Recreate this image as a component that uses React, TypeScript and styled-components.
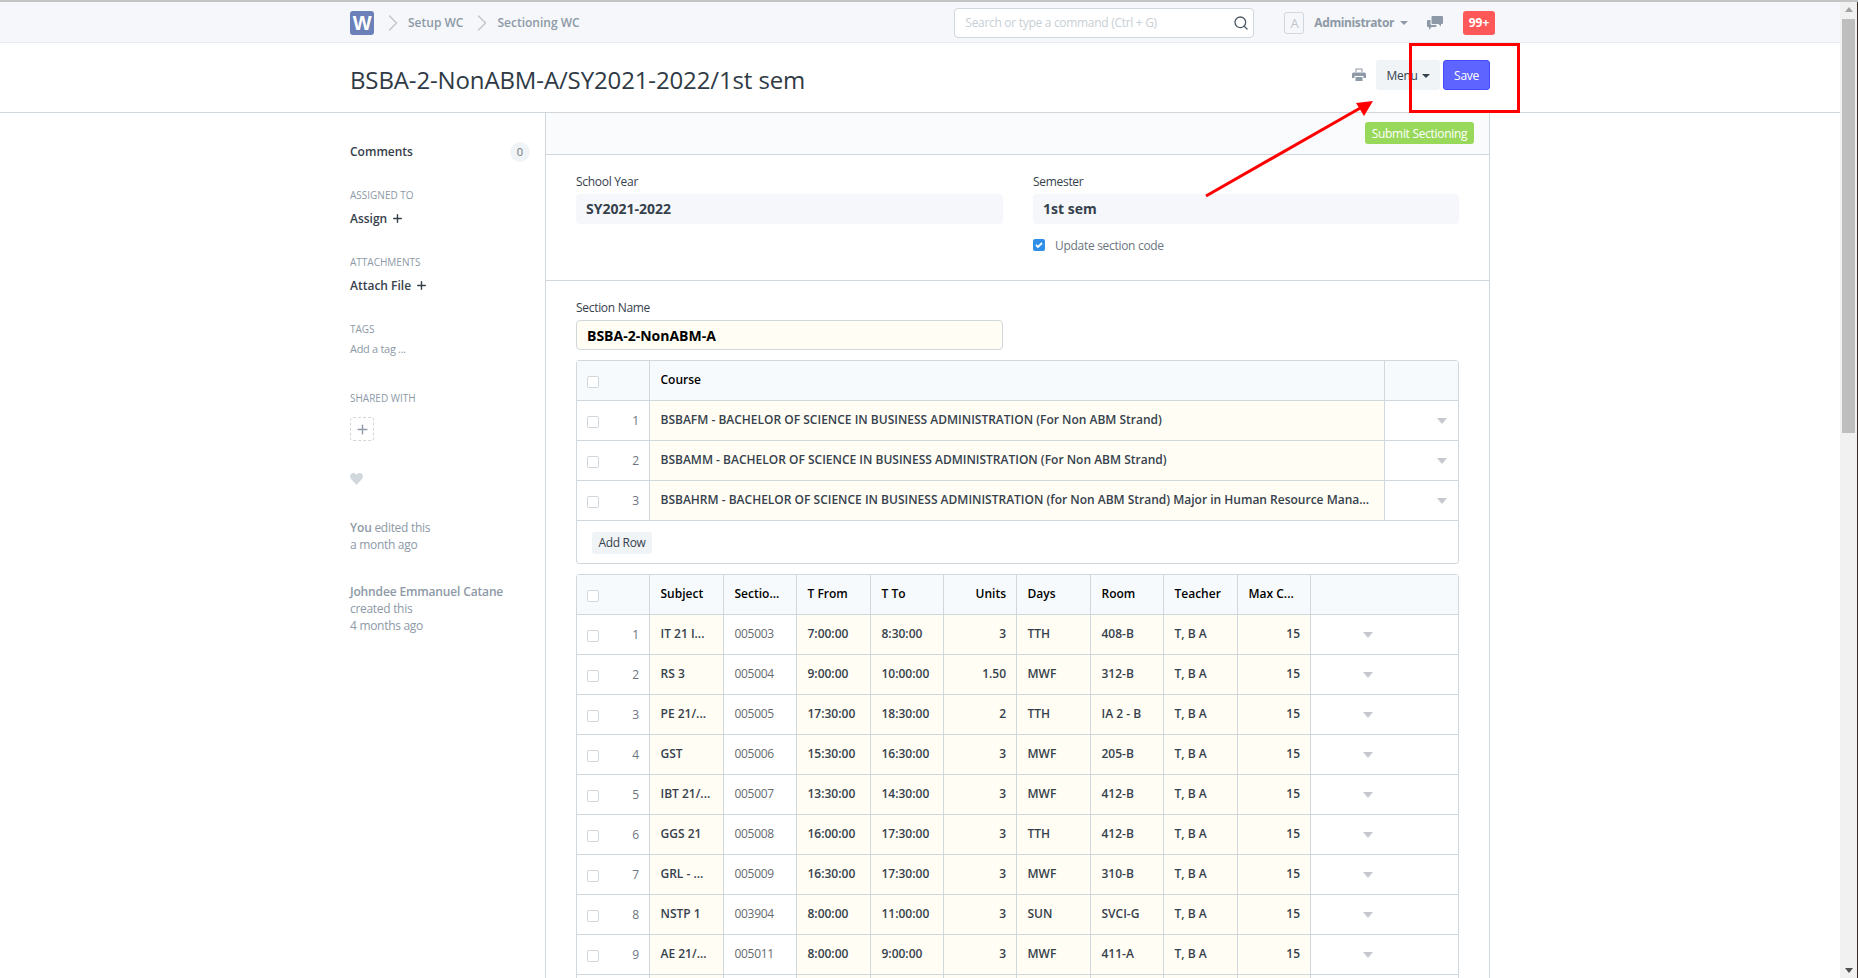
import React from 'react';
import styled, { createGlobalStyle } from 'styled-components';
import { Search, ChevronRight, Plus } from 'lucide-react';

const GlobalStyle = createGlobalStyle`
  html, body {
    margin: 0;
    padding: 0;
    height: 100%;
    overflow: hidden;
    background: #fff;
  }
  * {
    box-sizing: border-box;
  }
`;

const FONT = `'Open Sans', 'Noto Sans', sans-serif`;

const Screen = styled.div`
  position: relative;
  width: 1858px;
  height: 978px;
  overflow: hidden;
  display: flex;
  flex-direction: column;
  font-family: ${FONT};
  font-size: 12px;
  letter-spacing: -0.3px;
  color: #36414c;
  font-stretch: 92%;
`;

const TopEdge = styled.div`
  height: 2px;
  flex: none;
  background: #c4c4c4;
`;

const Body = styled.div`
  flex: 1;
  min-height: 0;
  display: flex;
`;

const Page = styled.div`
  flex: 1;
  min-width: 0;
  display: flex;
  flex-direction: column;
  overflow: hidden;
`;

const ScrollTrack = styled.div`
  width: 17px;
  flex: none;
  background: #f1f1f1;
  display: flex;
  flex-direction: column;
  align-items: center;
  padding-top: 5px;
`;

const ScrollArrow = styled.div<{ $down?: boolean }>`
  width: 0;
  height: 0;
  border-left: 4px solid transparent;
  border-right: 4px solid transparent;
  ${(p) =>
    p.$down
      ? 'border-top: 5px solid #505050;'
      : 'border-bottom: 5px solid #a3a3a3;'}
`;

const ScrollThumb = styled.div`
  width: 13px;
  height: 414px;
  margin-top: 7px;
  margin-bottom: auto;
  background: #bebebe;
`;

const ScrollEnd = styled.div`
  margin-bottom: 5px;
`;

const EdgeStrip = styled.div`
  width: 1px;
  flex: none;
  background: #3a2c25;
`;

const Navbar = styled.div`
  height: 41px;
  flex: none;
  background: #f5f7fa;
  border-bottom: 1px solid #e6e9ef;
`;

const Container = styled.div`
  width: 1170px;
  margin: 0 auto;
  padding: 0 15px;
`;

const NavRow = styled(Container)`
  height: 40px;
  display: flex;
  align-items: center;
  padding-top: 1px;
`;

const Logo = styled.div`
  width: 24px;
  height: 24px;
  border-radius: 3px;
  background: #6b7fb9;
  color: #fff;
  font-weight: 700;
  font-size: 20px;
  line-height: 24px;
  text-align: center;
  font-family: 'Liberation Sans', sans-serif;
`;

const Crumb = styled.span`
  font-size: 12px;
  font-weight: 600;
  letter-spacing: 0;
  color: #8d99a6;
`;

const CrumbArrow = styled(ChevronRight)`
  color: #c0c6cc;
  margin: 0 1px 0 5px;
`;

const SearchBox = styled.div`
  width: 300px;
  height: 30px;
  margin-left: auto;
  margin-right: 30px;
  background: #fff;
  border: 1px solid #d1d8dd;
  border-radius: 4px;
  display: flex;
  align-items: center;
  justify-content: space-between;
  padding: 0 4px 0 10px;
  color: #c8cfd5;
  font-size: 12px;
`;

const SearchIcon = styled(Search)`
  color: #4e5a66;
`;

const Avatar = styled.div`
  width: 20px;
  height: 22px;
  border: 1px solid #d1d8dd;
  border-radius: 3px;
  color: #c0c6cc;
  text-align: center;
  line-height: 20px;
  font-size: 13px;
  margin-right: 10px;
`;

const UserName = styled.span`
  font-size: 12px;
  font-weight: 700;
  letter-spacing: -0.4px;
  color: #8d99a6;
`;

const Caret = styled.span<{ $color?: string; $left?: number }>`
  width: 0;
  height: 0;
  margin-left: ${(p) => p.$left ?? 6}px;
  border-left: 4px solid transparent;
  border-right: 4px solid transparent;
  border-top: 4px solid ${(p) => p.$color ?? '#8d99a6'};
`;

const ChatIcon = styled.svg`
  margin: 0 20px 0 19px;
`;

const Badge = styled.div`
  width: 32px;
  height: 24px;
  margin-right: -5px;
  border-radius: 3px;
  background: #ff5858;
  color: #fff;
  font-weight: 700;
  font-size: 12px;
  letter-spacing: 0;
  line-height: 24px;
  text-align: center;
`;

const PageHead = styled.div`
  height: 70px;
  flex: none;
  border-bottom: 1px solid #d1d8dd;
`;

const HeadRow = styled(Container)`
  height: 69px;
  display: flex;
  align-items: flex-start;
`;

const Title = styled.h1`
  margin: 20px auto 0 0;
  font-size: 24px;
  line-height: 33px;
  font-weight: 400;
  letter-spacing: -0.13px;
  color: #2f3a45;
`;

const PrintIcon = styled.svg`
  margin: 25px 10px 0 0;
`;

const MenuButton = styled.div`
  width: 64px;
  height: 30px;
  margin: 17px 3px 0 0;
  padding-top: 1px;
  background: #f0f4f7;
  border-radius: 3px;
  display: flex;
  align-items: center;
  justify-content: center;
  font-size: 12px;
  color: #36414c;
`;

const SaveButton = styled.div`
  width: 47px;
  height: 30px;
  margin-top: 17px;
  background: #5e64ff;
  border: 1px solid #444bff;
  border-radius: 3px;
  color: #fff;
  font-size: 12px;
  line-height: 30px;
  text-align: center;
`;

const Columns = styled(Container)`
  display: flex;
  flex: 1;
  min-height: 0;
`;

const Sidebar = styled.div`
  width: 195px;
  flex: none;
  padding-top: 28px;
`;

const CommentRow = styled.div`
  height: 20px;
  display: flex;
  align-items: center;
  justify-content: space-between;
  padding-right: 15px;
  font-weight: 600;
  letter-spacing: 0;
  margin-bottom: 27px;
`;

const Count = styled.span`
  width: 20px;
  height: 20px;
  margin-top: 1px;
  border-radius: 50%;
  background: #f0f4f7;
  color: #6c7680;
  font-weight: 400;
  font-size: 11px;
  line-height: 20px;
  text-align: center;
`;

const SideLabel = styled.div`
  font-size: 10px;
  line-height: 14px;
  letter-spacing: 0;
  color: #8d99a6;
  text-transform: uppercase;
`;

const SideAction = styled.div`
  display: flex;
  align-items: center;
  gap: 4px;
  height: 20px;
  margin: 6px 0 27px;
  font-weight: 600;
  letter-spacing: 0;
  color: #36414c;
`;

const TagInput = styled.div`
  font-size: 11px;
  line-height: 16px;
  margin: 5px 0 34px;
  color: #8d99a6;
`;

const ShareBox = styled.div`
  width: 24px;
  height: 24px;
  margin-top: 12px;
  border: 1px dashed #d1d8dd;
  border-radius: 3px;
  display: flex;
  align-items: center;
  justify-content: center;
  color: #8d99a6;
`;

const Heart = styled.svg`
  display: block;
  margin: 32px 0 33.5px;
`;

const Activity = styled.div`
  font-size: 12px;
  line-height: 17px;
  color: #8d99a6;
  margin-bottom: 30px;
`;

const Strong = styled.span`
  font-weight: 600;
  letter-spacing: -0.15px;
`;

const Main = styled.div`
  flex: 1;
  min-width: 0;
  border-left: 1px solid #d1d8dd;
  border-right: 1px solid #d1d8dd;
`;

const FormBar = styled.div`
  height: 42px;
  padding: 9px 15px 0 0;
  background: #fafbfc;
  border-bottom: 1px solid #d1d8dd;
  display: flex;
  justify-content: flex-end;
  align-items: flex-start;
`;

const SubmitButton = styled.div`
  width: 109px;
  height: 22px;
  background: #98d85b;
  border-radius: 3px;
  color: #fff;
  font-size: 12px;
  line-height: 24px;
  text-align: center;
`;

const Section = styled.div`
  padding: 18px 30px 0;
`;

const TopSection = styled(Section)`
  height: 126px;
  border-bottom: 1px solid #d1d8dd;
`;

const FieldGrid = styled.div`
  display: grid;
  grid-template-columns: 427px 426px;
  gap: 30px;
`;

const FieldLabel = styled.div`
  font-size: 12px;
  line-height: 17px;
  margin-bottom: 4px;
  color: #36414c;
`;

const ReadValue = styled.div<{ $editable?: boolean }>`
  height: 30px;
  padding: 0 10px;
  border-radius: 4px;
  font-size: 14px;
  font-weight: 700;
  letter-spacing: 0;
  line-height: 30px;
  background: ${(p) => (p.$editable ? '#fffdf4' : '#f5f7fa')};
  border: ${(p) => (p.$editable ? '1px solid #d1d8dd' : 'none')};
  color: ${(p) => (p.$editable ? '#000' : '#36414c')};
`;

const CheckRow = styled.div`
  display: flex;
  align-items: center;
  gap: 10px;
  margin-top: 13px;
  height: 16px;
  color: #6c7680;
  font-size: 12px;
`;

const CheckedBox = styled.span`
  width: 12px;
  height: 12px;
  border-radius: 2px;
  background: #2f8fe8;
  display: flex;
  align-items: center;
  justify-content: center;
`;

const GridFrame = styled.div`
  border: 1px solid #d1d8dd;
  border-radius: 3px;
  margin-top: 10px;
  width: 883px;
`;

const Row = styled.div<{ $cols: string; $head?: boolean }>`
  display: grid;
  grid-template-columns: ${(p) => p.$cols};
  height: 40px;
  border-bottom: 1px solid #d1d8dd;
  background: ${(p) => (p.$head ? '#f7fafc' : '#fff')};
  color: ${(p) => (p.$head ? '#000' : '#36414c')};
  font-weight: 600;
  letter-spacing: 0;
`;

const Cell = styled.div<{ $right?: boolean; $input?: boolean; $plain?: boolean }>`
  min-width: 0;
  padding: 0 10px 2px 10.5px;
  display: flex;
  align-items: center;
  justify-content: ${(p) => (p.$right ? 'flex-end' : 'flex-start')};
  border-right: 1px solid #d1d8dd;
  background: ${(p) => (p.$input ? '#fffdf4' : 'transparent')};
  font-weight: ${(p) => (p.$plain ? 400 : 'inherit')};
  color: ${(p) => (p.$plain ? '#666b70' : 'inherit')};
  letter-spacing: ${(p) => (p.$plain ? '-0.3px' : '0')};
  white-space: nowrap;
  &:last-child {
    border-right: none;
  }
`;

const IndexCell = styled.div`
  padding: 0 10px;
  display: flex;
  align-items: center;
  justify-content: space-between;
  border-right: 1px solid #d1d8dd;
  color: #6c7680;
  font-weight: 400;
`;

const Tick = styled.span`
  width: 12px;
  height: 12px;
  margin-top: 3px;
  border: 1px solid #d1d8dd;
  border-radius: 2px;
  background: #fff;
`;

const RowCaret = styled.div<{ $end?: boolean }>`
  display: flex;
  align-items: center;
  justify-content: ${(p) => (p.$end ? 'flex-end' : 'flex-start')};
  padding: ${(p) => (p.$end ? '0 11px 0 0' : '0 0 0 52px')};
  margin-top: 1px;
`;

const CaretDown = styled.span`
  width: 0;
  height: 0;
  border-left: 5.5px solid transparent;
  border-right: 5.5px solid transparent;
  border-top: 6px solid #c4c8cc;
`;

const GridFooter = styled.div`
  height: 42px;
  padding: 11px 15px 0;
`;

const AddRow = styled.div`
  width: 60px;
  height: 22px;
  border-radius: 3px;
  background: #f0f4f7;
  text-align: center;
  line-height: 22px;
  font-size: 12px;
  color: #36414c;
`;

const RedBox = styled.div`
  position: absolute;
  left: 1409px;
  top: 43px;
  width: 111px;
  height: 70px;
  border: 3px solid #f00;
`;

const ArrowOverlay = styled.svg`
  position: absolute;
  left: 0;
  top: 0;
  pointer-events: none;
`;

const COURSES = [
  'BSBAFM - BACHELOR OF SCIENCE IN BUSINESS ADMINISTRATION (For Non ABM Strand)',
  'BSBAMM - BACHELOR OF SCIENCE IN BUSINESS ADMINISTRATION (For Non ABM Strand)',
  'BSBAHRM - BACHELOR OF SCIENCE IN BUSINESS ADMINISTRATION (for Non ABM Strand) Major in Human Resource Mana...',
];

const SUBJECTS = [
  ['IT 21 I...', '005003', '7:00:00', '8:30:00', '3', 'TTH', '408-B'],
  ['RS 3', '005004', '9:00:00', '10:00:00', '1.50', 'MWF', '312-B'],
  ['PE 21/...', '005005', '17:30:00', '18:30:00', '2', 'TTH', 'IA 2 - B'],
  ['GST', '005006', '15:30:00', '16:30:00', '3', 'MWF', '205-B'],
  ['IBT 21/...', '005007', '13:30:00', '14:30:00', '3', 'MWF', '412-B'],
  ['GGS 21', '005008', '16:00:00', '17:30:00', '3', 'TTH', '412-B'],
  ['GRL - ...', '005009', '16:30:00', '17:30:00', '3', 'MWF', '310-B'],
  ['NSTP 1', '003904', '8:00:00', '11:00:00', '3', 'SUN', 'SVCI-G'],
  ['AE 21/...', '005011', '8:00:00', '9:00:00', '3', 'MWF', '411-A'],
];

const COURSE_COLS = '73px 735px 1fr';
const SUBJECT_COLS = '73px 74px 73px 74px 73px 73px 74px 73px 74px 73px 1fr';

export default function App() {
  return (
    <Screen>
      <GlobalStyle />
      <TopEdge />
      <Body>
        <Page>
          <Navbar>
            <NavRow>
              <Logo>W</Logo>
              <CrumbArrow size={28} strokeWidth={1.2} />
              <Crumb>Setup WC</Crumb>
              <CrumbArrow size={28} strokeWidth={1.2} />
              <Crumb>Sectioning WC</Crumb>
              <SearchBox>
                Search or type a command (Ctrl + G)
                <SearchIcon size={16} />
              </SearchBox>
              <Avatar>A</Avatar>
              <UserName>Administrator</UserName>
              <Caret />
              <ChatIcon width="16" height="14" viewBox="0 0 16 14" fill="#8d99a6">
                <path d="M5.500 0H15a1 1 0 0 1 1 1v6a1 1 0 0 1-1 1h-1v2.500L11.500 8h-6a1 1 0 0 1-1-1V1a1 1 0 0 1 1-1z" />
                <path d="M3.500 4v4a1 1 0 0 0 1 1h5v1a1 1 0 0 1-1 1H4.500L2 14v-3H1a1 1 0 0 1-1-1V5a1 1 0 0 1 1-1z" />
              </ChatIcon>
              <Badge>99+</Badge>
            </NavRow>
          </Navbar>
          <PageHead>
            <HeadRow>
              <Title>BSBA-2-NonABM-A/SY2021-2022/1st sem</Title>
              <PrintIcon width="14" height="13" viewBox="0 0 14 13" fill="#8d99a6">
                <path d="M3.500 0.500h7v3.500h-1V1.500h-5V4h-1z" />
                <path d="M1.500 4.500h11A1.500 1.500 0 0 1 14 6v4h-2.500V8h-9v2H0V6a1.500 1.500 0 0 1 1.500-1.500z" />
                <path d="M3.500 9h7v4h-7z" />
              </PrintIcon>
              <MenuButton>
                Menu
                <Caret $color="#36414c" $left={4} />
              </MenuButton>
              <SaveButton>Save</SaveButton>
            </HeadRow>
          </PageHead>
          <Columns>
            <Sidebar>
              <CommentRow>
                Comments
                <Count>0</Count>
              </CommentRow>
              <SideLabel>Assigned To</SideLabel>
              <SideAction>
                Assign <Plus size={13} strokeWidth={2.6} />
              </SideAction>
              <SideLabel>Attachments</SideLabel>
              <SideAction>
                Attach File <Plus size={13} strokeWidth={2.6} />
              </SideAction>
              <SideLabel>Tags</SideLabel>
              <TagInput>Add a tag ...</TagInput>
              <SideLabel>Shared With</SideLabel>
              <ShareBox>
                <Plus size={15} strokeWidth={2.2} />
              </ShareBox>
              <Heart width="13" height="12" viewBox="0 0 24 22" fill="#d1d8dd">
                <path d="M12 22 2 11C-2 6 1 0 6.500 0 9 0 11 1.500 12 3.500 13 1.500 15 0 17.500 0 23 0 26 6 22 11z" />
              </Heart>
              <Activity>
                <Strong>You</Strong> edited this
                <br />a month ago
              </Activity>
              <Activity>
                <Strong>Johndee Emmanuel Catane</Strong>
                <br />
                created this
                <br />4 months ago
              </Activity>
            </Sidebar>
            <Main>
              <FormBar>
                <SubmitButton>Submit Sectioning</SubmitButton>
              </FormBar>
              <TopSection>
                <FieldGrid>
                  <div>
                    <FieldLabel>School Year</FieldLabel>
                    <ReadValue>SY2021-2022</ReadValue>
                  </div>
                  <div>
                    <FieldLabel>Semester</FieldLabel>
                    <ReadValue>1st sem</ReadValue>
                    <CheckRow>
                      <CheckedBox>
                        <svg width="10" height="10" viewBox="0 0 10 10" fill="none">
                          <path d="M2 5l2 2 4-4" stroke="#fff" strokeWidth="1.800" />
                        </svg>
                      </CheckedBox>
                      Update section code
                    </CheckRow>
                  </div>
                </FieldGrid>
              </TopSection>
              <Section>
                <FieldGrid>
                  <div>
                    <FieldLabel>Section Name</FieldLabel>
                    <ReadValue $editable>BSBA-2-NonABM-A</ReadValue>
                  </div>
                </FieldGrid>
                <GridFrame>
                  <Row $cols={COURSE_COLS} $head>
                    <IndexCell>
                      <Tick />
                    </IndexCell>
                    <Cell>Course</Cell>
                    <Cell />
                  </Row>
                  {COURSES.map((course, i) => (
                    <Row $cols={COURSE_COLS} key={course}>
                      <IndexCell>
                        <Tick />
                        {i + 1}
                      </IndexCell>
                      <Cell $input>{course}</Cell>
                      <RowCaret $end>
                        <CaretDown />
                      </RowCaret>
                    </Row>
                  ))}
                  <GridFooter>
                    <AddRow>Add Row</AddRow>
                  </GridFooter>
                </GridFrame>
                <GridFrame>
                  <Row $cols={SUBJECT_COLS} $head>
                    <IndexCell>
                      <Tick />
                    </IndexCell>
                    <Cell>Subject</Cell>
                    <Cell>Sectio...</Cell>
                    <Cell>T From</Cell>
                    <Cell>T To</Cell>
                    <Cell $right>Units</Cell>
                    <Cell>Days</Cell>
                    <Cell>Room</Cell>
                    <Cell>Teacher</Cell>
                    <Cell>Max C...</Cell>
                    <Cell />
                  </Row>
                  {SUBJECTS.map((s, i) => (
                    <Row $cols={SUBJECT_COLS} key={s[1]}>
                      <IndexCell>
                        <Tick />
                        {i + 1}
                      </IndexCell>
                      <Cell $input>{s[0]}</Cell>
                      <Cell $plain>{s[1]}</Cell>
                      <Cell $input>{s[2]}</Cell>
                      <Cell $input>{s[3]}</Cell>
                      <Cell $input $right>
                        {s[4]}
                      </Cell>
                      <Cell $input>{s[5]}</Cell>
                      <Cell $input>{s[6]}</Cell>
                      <Cell $input>T, B A</Cell>
                      <Cell $input $right>
                        15
                      </Cell>
                      <RowCaret>
                        <CaretDown />
                      </RowCaret>
                    </Row>
                  ))}
                  <Row $cols={SUBJECT_COLS}>
                    <IndexCell />
                    <Cell $input />
                    <Cell />
                    <Cell $input />
                    <Cell $input />
                    <Cell $input />
                    <Cell $input />
                    <Cell $input />
                    <Cell $input />
                    <Cell $input />
                    <Cell />
                  </Row>
                </GridFrame>
              </Section>
            </Main>
          </Columns>
        </Page>
        <ScrollTrack>
          <ScrollArrow />
          <ScrollThumb />
          <ScrollEnd>
            <ScrollArrow $down />
          </ScrollEnd>
        </ScrollTrack>
        <EdgeStrip />
      </Body>
      <RedBox />
      <ArrowOverlay width="1858" height="978">
        <line x1="1206" y1="196" x2="1362" y2="107" stroke="#f00" strokeWidth="3" />
        <path d="M1373 101 L1356 103 L1364 116 Z" fill="#f00" />
      </ArrowOverlay>
    </Screen>
  );
}
